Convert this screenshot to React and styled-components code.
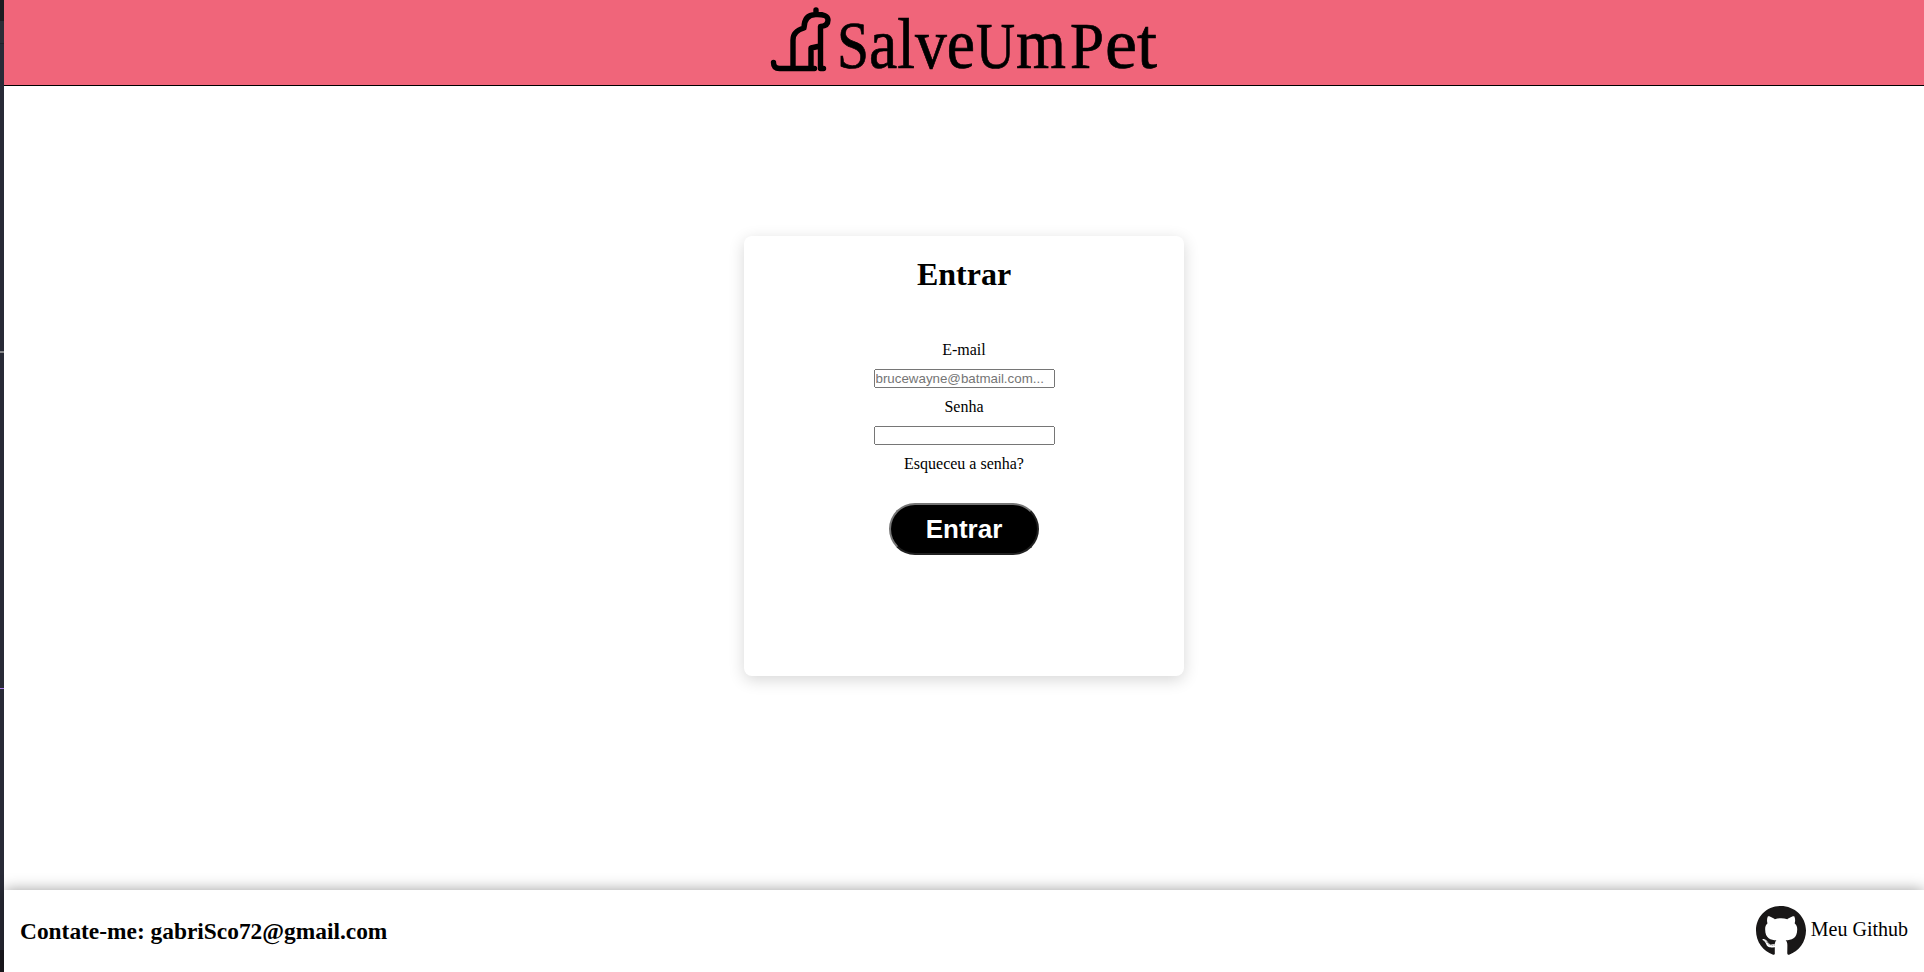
import React from "react";
import styled, { createGlobalStyle } from "styled-components";
import { FaGithub } from "react-icons/fa";

const GlobalStyle = createGlobalStyle`
  * { margin: 0; padding: 0; box-sizing: border-box; }
  body { background: #fff; color: #000; font-family: "Liberation Serif", "Times New Roman", serif; }
`;

const Screen = styled.div`
  display: flex;
  height: 972px;
  overflow: hidden;
`;

const EdgeStrip = styled.div`
  flex: 0 0 4px;
  background: linear-gradient(
    #1c1b20 0 21px, #2b2c36 21px 43px, #202129 43px 44px, #282a36 44px 351px,
    #86878a 351px 353px, #282a36 353px 688px, #a77ee8 688px 689px,
    #282a36 689px 950px, #1b191f 950px
  );
`;

const Page = styled.div`
  flex: 1;
  display: flex;
  flex-direction: column;
`;

const Header = styled.header`
  display: flex;
  justify-content: center;
  height: 86px;
  background: #f0657a;
  border-bottom: 1px solid #000;
`;

const Main = styled.main`
  flex: 1;
  display: flex;
  justify-content: center;
  align-items: flex-start;
  padding-top: 150px;
`;

const Card = styled.form`
  display: flex;
  flex-direction: column;
  align-items: center;
  width: 440px;
  height: 440px;
  padding-top: 20px;
  background: #fff;
  border-radius: 8px;
  box-shadow: 0 4px 16px rgba(0, 0, 0, 0.16);
`;

const Title = styled.h1`
  font-size: 32px;
  line-height: 37px;
  margin-bottom: 48px;
`;

const Label = styled.label`
  font-size: 16px;
  line-height: 18px;
  margin-bottom: 10px;
`;

const Input = styled.input`
  width: 181px;
  height: 19px;
  margin-bottom: 10px;
  font: 13.3333px "Liberation Sans", Arial, sans-serif;
`;

const ForgotLink = styled.a`
  font-size: 16px;
  line-height: 18px;
`;

const SubmitButton = styled.button`
  width: 150px;
  height: 52px;
  margin-top: 30px;
  background: #000;
  color: #fff;
  border: 2px solid;
  border-color: #767676 #212121 #212121 #767676;
  border-radius: 26px;
  font: bold 26px "Liberation Sans", Arial, sans-serif;
`;

const Footer = styled.footer`
  display: flex;
  justify-content: space-between;
  align-items: center;
  height: 82px;
  padding: 0 16px;
  background: #fff;
  box-shadow: 0 0 14px rgba(0, 0, 0, 0.38);
`;

const Contact = styled.h2`
  font-size: 23.4px;
  line-height: 28px;
`;

const GithubLink = styled.a`
  display: flex;
  align-items: center;
  gap: 5px;
  font-size: 20px;
  color: #000;
`;

const GithubText = styled.span`
  line-height: 23px;
  padding-bottom: 3px;
`;

const LogoText = styled.text`
  font-family: "Liberation Serif", serif;
  fill: #000;
  stroke: #000;
  stroke-width: 0.7px;
`;

const wordmark = [
  { text: "S", x: 73, width: 32, size: 67 },
  { text: "alve", x: 105, width: 106, size: 72 },
  { text: "U", x: 212, width: 39, size: 65 },
  { text: "m", x: 252, width: 50, size: 72 },
  { text: "P", x: 306, width: 34, size: 65 },
  { text: "et", x: 341, width: 52, size: 72 },
];

function Logo() {
  return (
    <svg width="400" height="85" viewBox="0 0 400 85" role="img" aria-label="SalveUmPet">
      <g fill="none" stroke="#000" strokeWidth="5.400" strokeLinecap="round" strokeLinejoin="round">
        <path d="M9.500 62.500Q9.500 68.500 15.500 68.500H50.500M29 68V40Q29 31 40 28Q40 15 51.500 14.500Q64 14 64 20Q64 26 56.500 26.500V68.500H59.500M52 10V14M56 46L47 48V68" />
      </g>
      {wordmark.map((part) => (
        <LogoText
          key={part.x}
          x={part.x}
          y="68"
          fontSize={part.size}
          textLength={part.width}
          lengthAdjust="spacingAndGlyphs"
        >
          {part.text}
        </LogoText>
      ))}
    </svg>
  );
}

export default function App() {
  return (
    <>
      <GlobalStyle />
      <Screen>
        <EdgeStrip />
        <Page>
          <Header><Logo /></Header>
          <Main>
            <Card>
              <Title>Entrar</Title>
              <Label htmlFor="email">E-mail</Label>
              <Input id="email" type="email" placeholder="brucewayne@batmail.com..." />
              <Label htmlFor="senha">Senha</Label>
              <Input id="senha" type="password" />
              <ForgotLink>Esqueceu a senha?</ForgotLink>
              <SubmitButton type="button">Entrar</SubmitButton>
            </Card>
          </Main>
          <Footer>
            <Contact>Contate-me: gabriSco72@gmail.com</Contact>
            <GithubLink>
              <FaGithub size={50} viewBox="0 8 496 496" color="#191717" />
              <GithubText>Meu Github</GithubText>
            </GithubLink>
          </Footer>
        </Page>
      </Screen>
    </>
  );
}
